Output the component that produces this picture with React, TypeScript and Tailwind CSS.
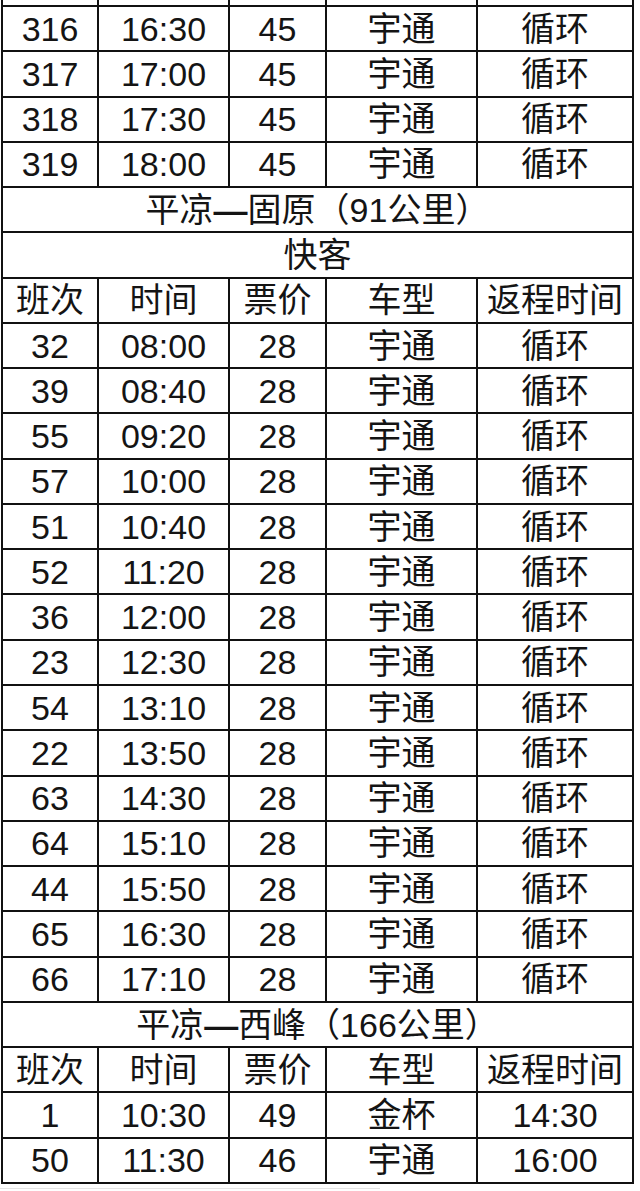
import React from "react";

type Row = string[];

const top: Row[] = [
  ["316", "16:30", "45", "宇通", "循环"],
  ["317", "17:00", "45", "宇通", "循环"],
  ["318", "17:30", "45", "宇通", "循环"],
  ["319", "18:00", "45", "宇通", "循环"],
];

const header: Row = ["班次", "时间", "票价", "车型", "返程时间"];

const kuai: [string, string][] = [
  ["32", "08:00"],
  ["39", "08:40"],
  ["55", "09:20"],
  ["57", "10:00"],
  ["51", "10:40"],
  ["52", "11:20"],
  ["36", "12:00"],
  ["23", "12:30"],
  ["54", "13:10"],
  ["22", "13:50"],
  ["63", "14:30"],
  ["64", "15:10"],
  ["44", "15:50"],
  ["65", "16:30"],
  ["66", "17:10"],
];

const xifeng: Row[] = [
  ["1", "10:30", "49", "金杯", "14:30"],
  ["50", "11:30", "46", "宇通", "16:00"],
];

function Cells({ row }: { row: Row }) {
  return (
    <>
      {row.map((c, i) => (
        <div
          key={i}
          className="bg-white flex items-center justify-center leading-none whitespace-nowrap"
        >
          {c}
        </div>
      ))}
    </>
  );
}

function Title({ a, b }: { a: string; b: string }) {
  return (
    <div className="col-span-5 bg-white flex items-center justify-center leading-none whitespace-nowrap">
      <span>{a}</span>
      <span className="font-bold">—</span>
      <span>{b}</span>
    </div>
  );
}

function Span({ text }: { text: string }) {
  return (
    <div className="col-span-5 bg-white flex items-center justify-center leading-none whitespace-nowrap">
      {text}
    </div>
  );
}

export default function App() {
  return (
    <div className="w-[640px] h-[1191px] bg-white overflow-hidden">
      <div
        className="ml-[1px] w-[633px] h-[1184px] bg-[#111] grid gap-[2px] px-[2px] pb-[2px] grid-cols-[94px_129px_95px_149px_154px] grid-rows-[5px_repeat(26,minmax(0,1fr))] text-[34px] text-[#141414]"
        style={{
          fontFamily:
            '"Liberation Sans", Arial, "Noto Sans CJK SC", sans-serif',
        }}
      >
        <div className="bg-white" />
        <div className="bg-white" />
        <div className="bg-white" />
        <div className="bg-white" />
        <div className="bg-white" />
        {top.map((r, i) => (
          <Cells key={"t" + i} row={r} />
        ))}
        <Title a="平凉" b="固原（91公里）" />
        <Span text="快客" />
        <Cells row={header} />
        {kuai.map(([a, b], i) => (
          <Cells key={"k" + i} row={[a, b, "28", "宇通", "循环"]} />
        ))}
        <Title a="平凉" b="西峰（166公里）" />
        <Cells row={header} />
        {xifeng.map((r, i) => (
          <Cells key={"x" + i} row={r} />
        ))}
      </div>
      <div className="mt-[4px] h-[1px] w-[380px] bg-[#e4e4e4]" />
    </div>
  );
}
